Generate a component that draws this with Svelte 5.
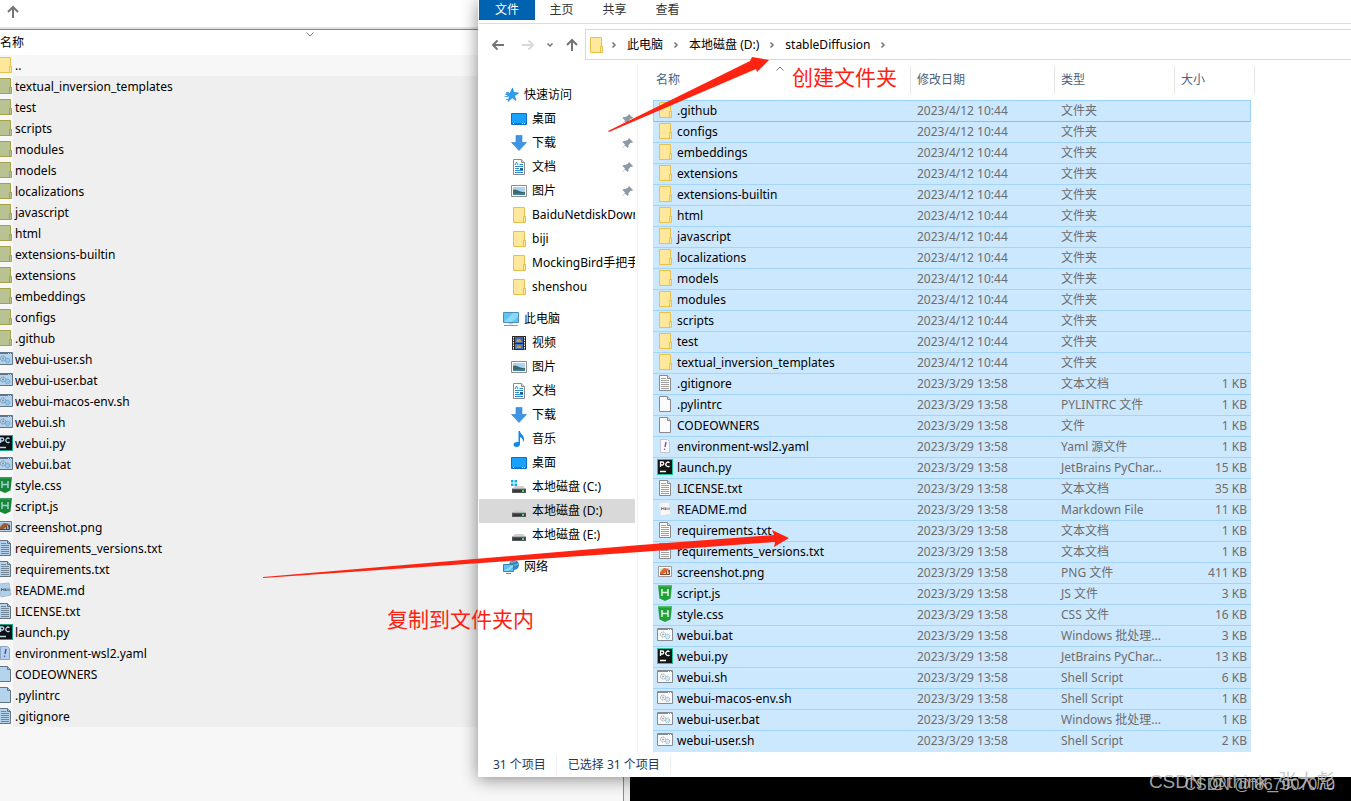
<script>
    const folders = [
        ".github", "configs", "embeddings", "extensions", "extensions-builtin", "html",
        "javascript", "localizations", "models", "modules", "scripts", "test",
        "textual_inversion_templates",
    ]

    const files = [
        { name: ".gitignore", icon: "text", type: "文本文档", size: 1 },
        { name: ".pylintrc", icon: "blank", type: "PYLINTRC 文件", size: 1 },
        { name: "CODEOWNERS", icon: "blank", type: "文件", size: 1 },
        { name: "environment-wsl2.yaml", icon: "yaml", type: "Yaml 源文件", size: 1 },
        { name: "launch.py", icon: "pycharm", type: "JetBrains PyChar...", size: 15 },
        { name: "LICENSE.txt", icon: "text", type: "文本文档", size: 35 },
        { name: "README.md", icon: "markdown", type: "Markdown File", size: 11 },
        { name: "requirements.txt", icon: "text", type: "文本文档", size: 1 },
        { name: "requirements_versions.txt", icon: "text", type: "文本文档", size: 1 },
        { name: "screenshot.png", icon: "image", type: "PNG 文件", size: 411 },
        { name: "script.js", icon: "hbuilder", type: "JS 文件", size: 3 },
        { name: "style.css", icon: "hbuilder", type: "CSS 文件", size: 16 },
        { name: "webui.bat", icon: "script", type: "Windows 批处理...", size: 3 },
        { name: "webui.py", icon: "pycharm", type: "JetBrains PyChar...", size: 13 },
        { name: "webui.sh", icon: "script", type: "Shell Script", size: 6 },
        { name: "webui-macos-env.sh", icon: "script", type: "Shell Script", size: 1 },
        { name: "webui-user.bat", icon: "script", type: "Windows 批处理...", size: 1 },
        { name: "webui-user.sh", icon: "script", type: "Shell Script", size: 2 },
    ]

    const rows = [
        ...folders.map((name) => ({ name, icon: "folder", date: "2023/4/12 10:44", type: "文件夹", size: "" })),
        ...files.map((f) => ({ ...f, date: "2023/3/29 13:58", size: f.size + " KB" })),
    ]

    // the archive lists the same entries, folders first, both groups descending
    const archiveOrder = [
        "webui-user.sh", "webui-user.bat", "webui-macos-env.sh", "webui.sh", "webui.py", "webui.bat",
        "style.css", "script.js", "screenshot.png", "requirements_versions.txt", "requirements.txt",
        "README.md", "LICENSE.txt", "launch.py", "environment-wsl2.yaml", "CODEOWNERS", ".pylintrc",
        ".gitignore",
    ]
    const archive = [...[...folders].reverse(), ...archiveOrder].map((name) => rows.find((r) => r.name === name))

    const groups = [
        {
            name: "快速访问", icon: "star",
            items: [
                { name: "桌面", icon: "desktop", pinned: true },
                { name: "下载", icon: "download", pinned: true },
                { name: "文档", icon: "document", pinned: true },
                { name: "图片", icon: "picture", pinned: true },
                { name: "BaiduNetdiskDownload", icon: "folder" },
                { name: "biji", icon: "folder" },
                { name: "MockingBird手把手", icon: "folder" },
                { name: "shenshou", icon: "folder" },
            ],
        },
        {
            name: "此电脑", icon: "computer",
            items: [
                { name: "视频", icon: "video" },
                { name: "图片", icon: "picture" },
                { name: "文档", icon: "document" },
                { name: "下载", icon: "download" },
                { name: "音乐", icon: "music" },
                { name: "桌面", icon: "desktop" },
                { name: "本地磁盘 (C:)", icon: "system-drive" },
                { name: "本地磁盘 (D:)", icon: "drive" },
                { name: "本地磁盘 (E:)", icon: "drive" },
            ],
        },
        { name: "网络", icon: "network", items: [] },
    ]

    const path = ["此电脑", "本地磁盘 (D:)", "stableDiffusion"]

    let current = $state("本地磁盘 (D:)")
</script>

{#snippet icon(name)}
    <svg class="icon" viewBox="0 0 16 16" aria-hidden="true">
        {#if name === "folder"}
            <path d="M2.5 .5h11v9h1v6h-12z" fill="#ffe79b" stroke="#e6c14c" />
            <path d="M12.5 15v-5.500h2" fill="none" stroke="#e6c14c" />
        {:else if name === "text" || name === "blank"}
            <path d="M2.500 .5h8l3 3v12h-11z" fill="#fbfbfb" stroke="#8a8a8a" />
            <path d="M10.500 .5v3h3" fill="#e4e4e4" stroke="#8a8a8a" />
            {#if name === "text"}
                <path d="M4 3.500h5M4 5.500h8M4 7.500h8M4 9.500h8M4 11.500h8M4 13.500h8" stroke="#a0a0a0" />
            {/if}
        {:else if name === "yaml"}
            <path d="M3.500 1.500h7l2 2v11h-9z" fill="#fafafc" stroke="#c3c5cf" />
            <path d="M9 4l-1 5" stroke="#7c4fb5" stroke-width="1.400" />
            <circle cx="7.500" cy="11.200" r=".8" fill="#7c4fb5" />
        {:else if name === "pycharm"}
            <path d="M0 0h16v16H0z" fill="#20c794" />
            <path d="M1 1h14v14H1z" fill="#151515" />
            <path d="M3.500 8V3h1.800a1.500 1.500 0 0 1 0 3H3.500M12.500 3.700a2.200 2.200 0 1 0 0 3.300M3 12.500h6" fill="none" stroke="#fff" stroke-width="1.300" />
        {:else if name === "markdown"}
            <path d="M2 2l10-1 2 12-10 2z" fill="#f7f7f7" stroke="#e0e4e8" />
            <path d="M4.500 9V6.500L6 8l1-1.500V9M8.500 6.500V9M10 6.500V9M12 6.500V9" fill="none" stroke="#777" />
        {:else if name === "image"}
            <path d="M1.500 2.500h13v10h-13z" fill="#fff" stroke="#9a9a9a" />
            <path d="M3 4h10v7H3z" fill="#d9e3d8" />
            <path d="M3 8l4-4 5 1-3 3-4 3H3z" fill="#dd6a2c" />
            <path d="M3 10h10v1H3zM9 7h1v4H9zM11 6h2v5h-1z" fill="#8d4a32" />
        {:else if name === "hbuilder"}
            <path d="M1 0h14l-1.500 13.500L8 16l-5.500-2.500z" fill="#21a03a" />
            <path d="M1 0h14l-.2 1.500H1.200z" fill="#52bd62" />
            <path d="M5 4v7M11 4v7M5 7.500h6" stroke="#dff5e0" stroke-width="1.500" />
        {:else if name === "script"}
            <path d="M.5 1.500h15v12H.5z" fill="#fafafa" stroke="#868b90" />
            <path d="M1 2.500h14" stroke="#868b90" />
            <path d="M11 2.500h1M13 2.500h1" stroke="#fff" />
            <circle cx="6" cy="7.500" r="2.500" fill="none" stroke="#959fa8" stroke-dasharray="1.300 .6" />
            <circle cx="6" cy="7.500" r="1" fill="#a7afb6" />
            <circle cx="10.500" cy="9.500" r="2.300" fill="#d2e9f5" stroke="#85b8d4" stroke-dasharray="1.300 .6" />
        {:else if name === "star"}
            <path d="M9.500 1l1.200 4.500 4.800.5-4 2.700 1.500 4.800-3.800-2.800L5 14.500l1.500-5L2.500 7l4.800-1z" fill="#2c9ff0" stroke="#1787d8" stroke-width=".7" />
            <path d="M3 5.500h3M1.500 9.500h4M3 12.500h2" stroke="#4aaaf0" />
        {:else if name === "desktop"}
            <path d="M.5 2.500h15v11H.5z" fill="#18a2ff" stroke="#0b6fc2" />
            <path d="M1 12.500h14" stroke="#0b78d4" />
            <path d="M2 12.500h1M11 12.500h1M13 12.500h1" stroke="#fff" />
        {:else if name === "download"}
            <path d="M5 .5h6v7h4.500L8 15.500.5 7.500H5z" fill="#3f95e3" stroke="#2b7ed0" stroke-width=".6" />
        {:else if name === "document"}
            <path d="M2.500 .5h8l3 3v12h-11z" fill="#fff" stroke="#8a8a8a" />
            <path d="M10.500 .5v3h3" fill="#e4e4e4" stroke="#8a8a8a" />
            <path d="M4 6l1.500-3L7 6M8.500 5.500H12M4 7.500h8M4 9.500h4M4 11.500h8M4 13.500h8" fill="none" stroke="#2e8fd0" />
            <path d="M9 9h3v2H9z" fill="#225f91" />
        {:else if name === "picture"}
            <path d="M.5 2.500h15v11H.5z" fill="#fff" stroke="#8c8c8c" />
            <path d="M2 4h12v8H2z" fill="#a9d4f2" />
            <path d="M2 7c3-2 5 2 12 2v3H2z" fill="#42695e" />
            <path d="M2 10.500h12V12H2z" fill="#3a83bd" />
        {:else if name === "computer"}
            <path d="M.5 1.500h15v10H.5z" fill="#5ec4f4" stroke="#4b8fb8" />
            <path d="M1 11l9-9h5v4l-6 5z" fill="#8bd8fa" />
            <path d="M6 12h4v1.500H6z" fill="#b8cfdf" />
            <path d="M1 14.500h14" stroke="#6aa5c8" />
        {:else if name === "video"}
            <path d="M1 1h14v14H1z" fill="#2a2a2a" />
            <path d="M2.500 2v13M13.500 2v13" stroke="#fff" stroke-dasharray="1.500 1" />
            <path d="M4 2h8v6H4z" fill="#3c66b5" />
            <path d="M4 9h8v5H4z" fill="#4a77c4" />
            <path d="M6 4h3l2 3H5zM5 13l2-3 3 1v2z" fill="#d09a30" />
        {:else if name === "music"}
            <path d="M7.500 0h1.500c0 3 4 4 4 8 0 1.500-.5 2.500-1 3 .3-3-1.300-4.300-3-5v7c0 1.800-1.500 3-3.500 3S2.500 15 2.500 13.500 4 11 6 11h1.500z" fill="#1089e8" />
        {:else if name === "drive" || name === "system-drive"}
            <path d="M4 7h8l3 3H1z" fill="#d0d0d0" />
            <path d="M1 10h14v4H1z" fill="#55585b" />
            <path d="M2 11h12v2H2z" fill="#38393b" />
            <path d="M1 9.500h14" stroke="#b0b0b0" />
            <path d="M11 11h2v2h-2z" fill="#42e26b" />
            {#if name === "system-drive"}
                <path d="M0 1h2.500v2.500H0zM3.500 1H6v2.500H3.500zM0 4.500h2.500V7H0zM3.500 4.500H6V7H3.500z" fill="#0fb0e8" />
            {/if}
        {:else if name === "network"}
            <circle cx="11" cy="6" r="5" fill="#3489c0" />
            <path d="M8 3c2 1 3-1 5-1M9 7c2-2 4 0 6-2" stroke="#8cc6e8" fill="none" />
            <path d="M.5 5.500h10v7H.5z" fill="#5cc2f5" stroke="#3a80ad" />
            <path d="M1 12l8-6h1v2l-5 4z" fill="#8fdbfb" />
            <path d="M3 14.500h5" stroke="#5d8ba8" />
        {:else if name === "pin"}
            <path d="M10 3l4 4-1 1-1-.5-2.500 2.500v2l-1 1-2.500-2.500L3 14l.5-1L6 9.500 3.500 7l1-1h2L9 4.500z" fill="#8d99a4" />
        {/if}
    </svg>
{/snippet}

{#snippet glyph(d)}
    <svg class="glyph" viewBox="0 0 14 14" aria-hidden="true"><path {d} /></svg>
{/snippet}

<div class="screen">
    <!-- multiplies the icon colours with the pale blue of a selected entry -->
    <svg class="defs" aria-hidden="true">
        <filter id="selected" color-interpolation-filters="sRGB">
            <feColorMatrix values=".72 0 0 0 0  0 .84 0 0 0  0 0 .94 0 0  0 0 0 1 0" />
        </filter>
    </svg>

    <main class="archive">
        <div class="archive-bar">
            <button class="up" aria-label="向上">{@render glyph("M7 13V2M2 7l5-5 5 5")}</button>
        </div>
        <div class="archive-head">
            <span>名称</span>
            <svg class="sort" viewBox="0 0 8 5" aria-hidden="true"><path d="M.5 .5L4 4 7.500 .5" /></svg>
        </div>
        <ul class="archive-list">
            <li class="parent">
                <span class="cut">{@render icon("folder")}</span>
                <span class="label">..</span>
            </li>
            {#each archive as entry}
                <li>
                    <span class="cut tinted">{@render icon(entry.icon)}</span>
                    <span class="label">{entry.name}</span>
                </li>
            {/each}
        </ul>
    </main>

    <div class="terminal"></div>

    <section class="explorer">
        <div class="ribbon">
            <button class="tab file">文件</button>
            <button class="tab">主页</button>
            <button class="tab">共享</button>
            <button class="tab">查看</button>
        </div>

        <div class="address">
            <button class="nav-button" aria-label="后退">{@render glyph("M13 7H2M6.500 2.500L2 7l4.500 4.500")}</button>
            <button class="nav-button off" aria-label="前进">{@render glyph("M1 7h11M7.500 2.500L12 7l-4.500 4.500")}</button>
            <button class="nav-button small" aria-label="最近浏览的位置">{@render glyph("M4.500 5.500L7 8l2.500-2.500")}</button>
            <button class="nav-button" aria-label="上移">{@render glyph("M7 13V2M2 7l5-5 5 5")}</button>
            <div class="crumbs">
                {@render icon("folder")}
                <span class="chevron">{@render glyph("M5.500 4.500L8 7 5.500 9.500")}</span>
                {#each path as part}
                    <button class="crumb">{part}</button>
                    <span class="chevron">{@render glyph("M5.500 4.500L8 7 5.500 9.500")}</span>
                {/each}
            </div>
        </div>

        <div class="body">
            <nav class="tree">
                {#each groups as group}
                    <div class="group">
                        <a class="node" href="#top">{@render icon(group.icon)}<span>{group.name}</span></a>
                        {#each group.items as item}
                            <a
                                class="node child"
                                class:current={item.name === current}
                                href="#top"
                                onclick={() => (current = item.name)}
                            >
                                {@render icon(item.icon)}
                                <span class="node-name">{item.name}</span>
                                {#if item.pinned}
                                    <span class="pin">{@render icon("pin")}</span>
                                {/if}
                            </a>
                        {/each}
                    </div>
                {/each}
            </nav>

            <div class="content">
                <table>
                    <colgroup>
                        <col class="c-name" />
                        <col class="c-date" />
                        <col class="c-type" />
                        <col class="c-size" />
                        <col class="c-rest" />
                    </colgroup>
                    <thead>
                        <tr>
                            <th>
                                <button class="sorted">
                                    名称
                                    <svg class="sort" viewBox="0 0 8 5" aria-hidden="true"><path d="M.5 4.500L4 1l3.500 3.500" /></svg>
                                </button>
                            </th>
                            <th><button>修改日期</button></th>
                            <th><button>类型</button></th>
                            <th colspan="2"><button>大小</button></th>
                        </tr>
                    </thead>
                    <tbody>
                        {#each rows as row}
                            <tr>
                                <td class="name"><div>{@render icon(row.icon)}{row.name}</div></td>
                                <td>{row.date}</td>
                                <td>{row.type}</td>
                                <td class="size">{row.size}</td>
                            </tr>
                        {/each}
                    </tbody>
                </table>
            </div>
        </div>

        <footer class="status">
            <span>31 个项目</span>
            <span>已选择 31 个项目</span>
        </footer>
    </section>

    <svg class="arrows" aria-hidden="true">
        <path d="M608 131L750 61l2-4 17 3-12 12-1-3L609 132z" />
        <path d="M263 577l377-32 134-10-2-5 17 8-15 9 1-5-135 10-377 26z" />
    </svg>
    <p class="note create">创建文件夹</p>
    <p class="note copy">复制到文件夹内</p>

    <p class="watermark large">CSDN @think_张大彪</p>
    <p class="watermark">CSDN @f867907070</p>
</div>

<style>
    :global(body) {
        margin: 0;
        overflow: hidden;
        background: #f7f7f7;
    }

    .screen {
        position: relative;
        height: 100vh;
        overflow: hidden;
        font: 12px/20px "Noto Sans", "Noto Sans CJK SC", sans-serif;
        color: #000;
    }

    button {
        padding: 0;
        border: none;
        background: none;
        font: inherit;
        color: inherit;
    }

    .defs {
        position: absolute;
        width: 0;
        height: 0;
    }

    .icon {
        flex: none;
        display: block;
        width: 16px;
        height: 16px;
    }

    .glyph {
        display: block;
        width: 14px;
        height: 14px;
        fill: none;
        stroke: #757575;
        stroke-width: 2;
    }

    .sort {
        position: absolute;
        width: 8px;
        height: 5px;
        fill: none;
        stroke: #777;
    }

    /* archive window behind */
    .archive {
        box-sizing: border-box;
        width: 624px;
        height: 100%;
        background: #f7f7f7;
        border-right: 1px solid #888b92;
    }

    .archive-bar {
        display: flex;
        align-items: center;
        height: 27px;
        padding: 0 6px;
        background: #fff;
        border-bottom: 2px solid #e3e3e3;
    }

    .up {
        padding-bottom: 4px;
    }

    .archive-head {
        position: relative;
        height: 25px;
        line-height: 25px;
        background: #fff;
        border-top: 1px solid #828790;
    }

    .archive-head .sort {
        top: 2px;
        left: 306px;
    }

    .archive-list {
        margin: 0;
        padding: 0;
        list-style: none;
    }

    .archive-list li {
        display: flex;
        height: 21px;
        line-height: 21px;
    }

    .cut {
        display: flex;
        justify-content: flex-end;
        box-sizing: border-box;
        width: 13px;
        padding-top: 2px;
        overflow: hidden;
    }

    .tinted .icon {
        filter: url(#selected);
    }

    .label {
        flex: 1;
        padding-left: 2px;
        background: #efefef;
    }

    .parent .label {
        background: none;
    }

    .terminal {
        position: absolute;
        left: 624px;
        right: 0;
        bottom: 0;
        height: 30px;
        background: #000;
        border-left: 6px solid #ececec;
    }

    /* file explorer window */
    .explorer {
        position: absolute;
        top: 0;
        left: 478px;
        right: 0;
        display: flex;
        flex-direction: column;
        padding-left: 1px;
        background: #fff;
        box-shadow: 0 2px 16px rgba(0, 0, 0, 0.45);
    }

    .ribbon {
        display: flex;
        height: 23px;
        border-bottom: 1px solid #dadbdc;
    }

    .tab {
        width: 53px;
        height: 20px;
        color: #333;
    }

    .tab.file {
        width: 56px;
        color: #fff;
        background: #0063b1;
    }

    .address {
        display: flex;
        align-items: center;
        padding: 5px 0 0 12px;
    }

    .nav-button {
        display: flex;
        padding-right: 16px;
    }

    .nav-button.off .glyph {
        stroke: #d9d9d9;
    }

    .nav-button.off,
    .nav-button.small {
        padding-right: 8px;
    }

    .nav-button:nth-child(4) {
        padding-right: 6px;
    }

    .crumbs {
        flex: 1;
        display: flex;
        align-items: center;
        height: 29px;
        padding-left: 2px;
        border: 1px solid #d9d9d9;
        border-right: none;
    }

    .crumbs > :global(.icon) {
        margin-right: -2px;
    }

    .chevron {
        padding: 0 5px;
    }

    .chevron .glyph,
    .small .glyph {
        stroke-width: 1.5;
    }

    .crumb {
        padding: 0 1px;
        white-space: nowrap;
    }

    .body {
        display: flex;
    }

    .tree {
        flex: none;
        display: flex;
        flex-direction: column;
        gap: 8px;
        box-sizing: border-box;
        width: 159px;
        margin-top: 6px;
        padding: 17px 2px 0 0;
        border-right: 1px solid #f2f2f2;
    }

    .node {
        display: flex;
        align-items: center;
        gap: 5px;
        height: 24px;
        padding-left: 24px;
        color: #000;
        text-decoration: none;
        white-space: nowrap;
    }

    .child {
        padding-left: 32px;
        overflow: hidden;
    }

    .current {
        background: #d9d9d9;
    }

    .node-name {
        flex: 1;
    }

    .content {
        flex: 1;
        padding-left: 15px;
    }

    table {
        width: 602px;
        table-layout: fixed;
        border-spacing: 0;
    }

    .c-name {
        width: 258px;
    }

    .c-date {
        width: 144px;
    }

    .c-type {
        width: 120px;
    }

    .c-size {
        width: 76px;
    }

    .c-rest {
        width: 4px;
    }

    th {
        height: 40px;
        padding: 0;
        font-weight: 400;
    }

    th button {
        position: relative;
        display: block;
        width: 100%;
        height: 28px;
        padding-left: 6px;
        border-right: 1px solid #e5e5e5;
        color: #4c607a;
        text-align: left;
    }

    th .sorted {
        padding-left: 3px;
    }

    .sorted .sort {
        top: 0;
        left: 123px;
    }

    td {
        height: 20px;
        padding: 0 0 0 6px;
        line-height: 20px;
        color: #6d6d6d;
        background: #cce8ff;
        border-bottom: 1px solid #a3d4fb;
        white-space: nowrap;
    }

    td.name {
        padding-left: 4px;
        color: #000;
    }

    .name div {
        display: flex;
        gap: 4px;
    }

    .name .icon {
        margin-top: 1px;
    }

    td.size {
        padding: 0 4px 0 0;
        text-align: right;
    }

    tbody tr:first-child td {
        border-top: 1px solid #99d1ff;
        border-bottom-color: #7cc3fa;
    }

    tbody tr:first-child .name {
        padding-left: 3px;
        border-left: 1px solid #99d1ff;
    }

    tbody tr:first-child .size {
        padding-right: 3px;
        border-right: 1px solid #99d1ff;
    }

    tbody tr:last-child td {
        border-bottom-color: #cce8ff;
    }

    .status {
        display: flex;
        align-items: center;
        height: 25px;
        padding-left: 14px;
        color: #1e395b;
    }

    .status span {
        height: 20px;
        margin-right: 11px;
        padding-right: 10px;
        border-right: 1px solid #f0f0f0;
    }

    /* markings drawn over the windows */
    .arrows {
        position: absolute;
        inset: 0;
        width: 100%;
        height: 100%;
        fill: #ff2412;
        pointer-events: none;
    }

    .note {
        position: absolute;
        margin: 0;
        font-family: "Noto Sans CJK SC", sans-serif;
        font-size: 21px;
        font-weight: 400;
        line-height: 30px;
        color: #ff1e12;
        white-space: nowrap;
    }

    .create {
        top: 61px;
        left: 792px;
    }

    .copy {
        top: 603px;
        left: 387px;
    }

    .watermark {
        position: absolute;
        right: 16px;
        bottom: 4px;
        margin: 0;
        font-family: "Liberation Sans", "Noto Sans CJK SC", sans-serif;
        font-size: 16px;
        line-height: 24px;
        color: rgba(190, 190, 190, 0.85);
        white-space: nowrap;
    }

    .large {
        bottom: 7px;
        font-size: 19px;
    }
</style>
